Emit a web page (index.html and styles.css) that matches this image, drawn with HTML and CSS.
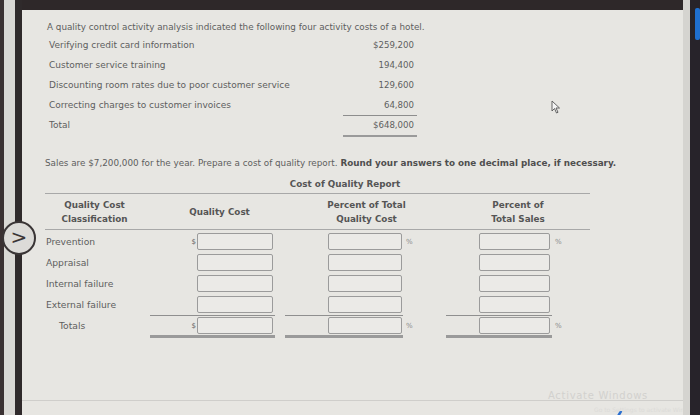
FILE: index.html
```html
<!DOCTYPE html>
<html>
<head>
<meta charset="utf-8">
<link rel="stylesheet" href="styles.css">
</head>
<body>
<div class="screen">
  <div class="bezel-left"></div>
  <div class="page">
    <p class="intro">A quality control activity analysis indicated the following four activity costs of a hotel.</p>
    <div class="costs">
      <div class="c-label">Verifying credit card information</div><div class="c-amt">$259,200</div>
      <div class="c-label">Customer service training</div><div class="c-amt">194,400</div>
      <div class="c-label">Discounting room rates due to poor customer service</div><div class="c-amt">129,600</div>
      <div class="c-label">Correcting charges to customer invoices</div><div class="c-amt">64,800</div>
      <div class="c-label">Total</div><div class="c-amt c-total">$648,000</div>
    </div>
    <p class="sales">Sales are $7,200,000 for the year. Prepare a cost of quality report. <b>Round your answers to one decimal place, if necessary.</b></p>
    <div class="report">
      <div class="r-title">Cost of Quality Report</div>
      <div class="r-head">
        <div class="h h1">Quality Cost<br>Classification</div>
        <div class="h h2">Quality Cost</div>
        <div class="h h3">Percent of Total<br>Quality Cost</div>
        <div class="h h5">Percent of<br>Total Sales</div>
      </div>
      <div class="r-body">
        <div class="lbl">Prevention</div>
        <div class="cost"><span class="sym">$</span><span class="inp"></span></div>
        <div></div>
        <div class="pct"><span class="inp"></span></div>
        <div class="pc">%</div>
        <div class="pct2"><span class="inp"></span></div>
        <div class="pc">%</div>

        <div class="lbl">Appraisal</div>
        <div class="cost"><span class="inp"></span></div>
        <div></div>
        <div class="pct"><span class="inp"></span></div>
        <div></div>
        <div class="pct2"><span class="inp"></span></div>
        <div></div>

        <div class="lbl">Internal failure</div>
        <div class="cost"><span class="inp"></span></div>
        <div></div>
        <div class="pct"><span class="inp"></span></div>
        <div></div>
        <div class="pct2"><span class="inp"></span></div>
        <div></div>

        <div class="lbl">External failure</div>
        <div class="cost"><span class="inp"></span></div>
        <div></div>
        <div class="pct"><span class="inp"></span></div>
        <div></div>
        <div class="pct2"><span class="inp"></span></div>
        <div></div>

        <div class="lbl tot-lbl">Totals</div>
        <div class="cost tot"><span class="sym">$</span><span class="inp"></span></div>
        <div></div>
        <div class="pct tot"><span class="inp"></span></div>
        <div class="pc">%</div>
        <div class="pct2 tot"><span class="inp"></span></div>
        <div class="pc">%</div>
      </div>
    </div>
    <div class="cursor">
      <svg width="10" height="14" viewBox="0 0 10 14"><path d="M1 1 L1 11 L3.5 8.5 L5.5 13 L7 12.3 L5 8 L8.5 8 Z" fill="#f4f4f4" stroke="#555" stroke-width="0.9" stroke-linejoin="round"/></svg>
    </div>
    <div class="watermark">Activate Windows</div>
    <div class="watermark2">Go to Settings to activate Windows.</div>
    <div class="bottom-rule"></div>
    <div class="tick"></div>
  </div>
  <div class="bezel-right"><div class="blue"></div></div>
  <div class="nav-btn">&gt;</div>
</div>
</body>
</html>
```

FILE: styles.css
```css
html, body {
  margin: 0;
  padding: 0;
}
body {
  width: 700px;
  height: 415px;
  overflow: hidden;
  background: #2b2627;
  font-family: "DejaVu Sans", Verdana, sans-serif;
  color: #5e5e5e;
}
.screen {
  position: relative;
  display: flex;
  width: 700px;
  height: 415px;
}
.bezel-left {
  width: 22px;
  flex: none;
  background: linear-gradient(to right, #3a3132 0 4px, #d9d8d4 4px 15px, #2f2a2b 15px 22px);
}
.page {
  position: relative;
  flex: 1;
  background: #e7e6e2;
  border-top: 10px solid #2e2829;
  padding: 0 0 0 25px;
  font-size: 8.8px;
}
.bezel-right {
  width: 17px;
  flex: none;
  position: relative;
  background: linear-gradient(to right, #d5d4d0 0 7px, #27232a 7px 17px);
}
.blue {
  position: absolute;
  left: 12px;
  top: 8px;
  width: 5px;
  height: 32px;
  background: #1f6fd0;
  border-radius: 2px;
}
.intro {
  margin: 12px 0 0 0;
  line-height: 10px;
}
.costs {
  display: grid;
  grid-template-columns: 294px 74px;
  margin: 3px 0 0 2px;
  grid-auto-rows: 20px;
  align-items: center;
  font-size: 9px;
}
.c-amt {
  text-align: right;
  padding-right: 3px;
  font-size: 8.6px;
}
.c-total {
  align-self: start;
  border-top: 1px solid #8d8d8d;
  border-bottom: 2px solid #9a9a9a;
  height: 22px;
  line-height: 19px;
  box-sizing: border-box;
}
.sales {
  margin: 23px 0 0 -2px;
  line-height: 10px;
}
.sales b {
  color: #4f4f4f;
}
.report {
  width: 545px;
  margin-left: -2px;
}
.r-title {
  text-align: center;
  font-weight: bold;
  color: #555;
  padding: 11px 0 4px 55px;
  border-bottom: 1px solid #a8a8a8;
  line-height: 10px;
}
.r-head {
  display: grid;
  grid-template-columns: 105px 125px 10px 118px 43px 106px 38px;
  height: 35px;
  border-bottom: 1px solid #a8a8a8;
  align-items: center;
  font-weight: bold;
  color: #555;
  line-height: 14px;
}
.h { text-align: center; }
.h1 { grid-column: 1; padding-right: 6px; }
.h2 { grid-column: 2; padding-left: 14px; }
.h3 { grid-column: 4; padding-left: 30px; margin-right: -15px; }
.h5 { grid-column: 6; padding-left: 26px; margin-right: -12px; }
.r-body {
  display: grid;
  grid-template-columns: 105px 125px 10px 118px 43px 106px 38px;
  grid-auto-rows: 21px;
  padding-top: 1px;
  align-items: center;
  font-size: 9.2px;
}
.lbl { padding-left: 1px; }
.tot-lbl { padding-left: 14px; }
.cost, .pct, .pct2 {
  display: flex;
  justify-content: flex-end;
  align-items: center;
  height: 21px;
  box-sizing: border-box;
}
.cost { padding-right: 2px; }
.pct { padding-right: 1px; }
.pct2 { padding-right: 2px; }
.sym {
  font-size: 7px;
  margin-right: 1px;
}
.inp {
  display: block;
  width: 74px;
  height: 15px;
  border: 1px solid #9b9b9b;
  border-radius: 2px;
  background: #ebeae7;
}
.cost .inp { width: 74px; }
.pct .inp { width: 72px; }
.pct2 .inp { width: 69px; }
.tot {
  border-top: 1px solid #8f8f8f;
  border-bottom: 3px solid #9a9a9a;
  height: 23px;
  margin-top: 2px;
}
.pc {
  font-size: 7px;
  color: #8a8a8a;
  padding-left: 3px;
}
.cursor {
  position: absolute;
  left: 529px;
  top: 90px;
}
.watermark {
  position: absolute;
  left: 526px;
  top: 380px;
  font-size: 10px;
  color: #d2d1ce;
  letter-spacing: 0.7px;
}
.watermark2 {
  position: absolute;
  left: 572px;
  top: 396px;
  font-size: 6px;
  color: #dcdbd8;
  white-space: nowrap;
}
.bottom-rule {
  position: absolute;
  left: 0;
  right: 0;
  top: 390px;
  height: 1px;
  background: #cfcecb;
}
.tick {
  position: absolute;
  left: 595px;
  top: 401px;
  width: 3px;
  height: 9px;
  background: #2a6fd0;
  transform: skewX(-30deg);
  border-radius: 1px;
}
.nav-btn {
  position: absolute;
  left: 2px;
  top: 221px;
  width: 30px;
  height: 30px;
  border: 2px solid #3a3536;
  border-radius: 50%;
  background: #dcdbd8;
  color: #3a3536;
  font-size: 20px;
  line-height: 28px;
  text-align: center;
  font-family: "DejaVu Sans", sans-serif;
}
```
